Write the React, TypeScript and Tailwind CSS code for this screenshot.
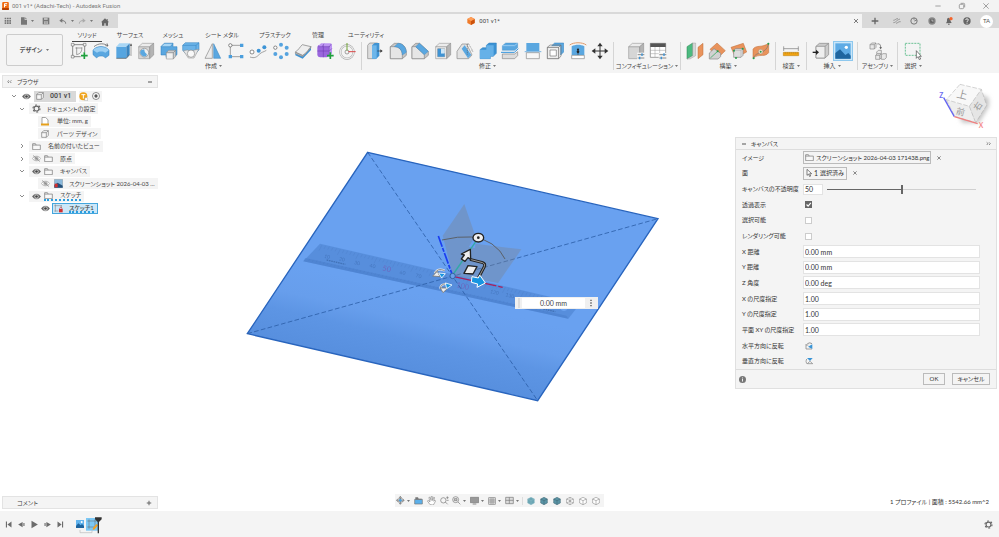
import React from 'react';

const BLUE = '#5aa7e0';
const GREY = '#d6d6d6';
const LINE = '#868686';

const Plus = ({ x, y }: { x: number; y: number }) => (
    <path d={`M${x - 10} ${y}h20M${x} ${y - 10}v20`} stroke="#1ea03c" strokeWidth="5" />
);

const Block = ({ fill = GREY, side = '#b4b4b4', top = '#ececec' }: { fill?: string; side?: string; top?: string }) => (
    <g stroke={LINE} strokeWidth="1.5" strokeLinejoin="round">
        <path d="M5 14h33v36H5z" fill={fill} />
        <path d="M5 14 16 4h34L38 14z" fill={top} />
        <path d="M38 14 50 4v35L38 50z" fill={side} />
    </g>
);

// every drawing uses a 54 x 54 box
const art: Record<string, React.ReactNode> = {
    sketch: (
        <g fill="none" stroke="#555" strokeWidth="2">
            <path d="M8 8h36M8 8v36h24M44 8v22" />
            <path d="M16 18h20M20 16v22C31 36 36 29 36 16" strokeWidth="1.5" />
            <path d="M4 4h8v8H4zM40 4h8v8h-8zM4 40h8v8H4z" fill="#f4f4f4" strokeWidth="1.5" />
            <Plus x={43} y={41} />
        </g>
    ),
    revolve: (
        <g>
            <path d="M3 24C14 10 40 10 51 24v16L40 48c-3-8-22-8-26 0L3 38z" fill={BLUE} stroke="#2f7fbd" strokeWidth="1.5" />
            <path d="M3 24l12 8c6-5 19-5 25 0l11-8C40 12 14 12 3 24z" fill="#9dd0f3" />
            <path d="M6 14C18 3 38 3 48 12M48 12l-8-1M48 12l-3-8" fill="none" stroke="#555" strokeWidth="2" />
        </g>
    ),
    extrude: (
        <g>
            <path d="M4 14h30v35H4z" fill="#56a5e0" />
            <path d="M4 14 13 4h31l-10 10z" fill="#a8d6f5" />
            <path d="M34 14 44 4v34L34 49z" fill="#3a85c0" />
            <path d="M4 49h30l10-11" fill="none" stroke="#555" strokeWidth="2" />
            <path d="M48 42V8" stroke="#555" strokeWidth="1.5" />
            <path d="M45 11l3-7 3 7z" fill="#333" />
        </g>
    ),
    hole: (
        <g>
            <Block />
            <circle cx="22" cy="32" r="13" fill="#eee" stroke={LINE} strokeWidth="2" />
            <path d="M13 24a11 11 0 0 0 17 15C28 32 22 34 22 22z" fill={BLUE} />
        </g>
    ),
    combine: (
        <g stroke="#2f7fbd" strokeWidth="1.5">
            <path d="M3 14 13 4h26v10h12v24L41 46H18v-7H3z" fill={BLUE} />
            <path d="M3 14 13 4h26l-8 10z" fill="#a8d6f5" />
            <path d="M19 32h21v19H19z" fill="#f1f1f1" stroke={LINE} />
            <path d="M19 32l7-7h21l-7 7zM40 32l7-7v18l-7 8z" fill="#ccc" stroke={LINE} />
        </g>
    ),
    form: (
        <g>
            <path d="M2 10 10 2h41v21L38 38 27 26 14 38 2 25z" fill="#6bb3e8" stroke="#2f7fbd" strokeWidth="1.5" />
            <path d="M2 10h40l9-8M42 10v22" fill="none" stroke="#2f7fbd" strokeWidth="1.5" />
            <path d="M4 26l12-2 11 6 11-6 12-2-14 26H19z" fill="#e6e6e6" stroke={LINE} strokeWidth="1.5" />
            <circle cx="27" cy="35" r="11" fill="#f8f8f8" stroke={LINE} strokeWidth="2" />
        </g>
    ),
    mirror: (
        <g>
            <path d="M25 5v44H3z" fill="#ececec" stroke={LINE} strokeWidth="2" />
            <path d="M29 5v44h21z" fill={BLUE} stroke="#2f7fbd" strokeWidth="1.5" />
        </g>
    ),
    rect: (
        <g>
            <path d="M10 10h34M10 10v34h34" fill="none" stroke="#777" strokeWidth="2" />
            <circle cx="10" cy="10" r="5" fill="#fff" stroke="#555" strokeWidth="2" />
            <path d="M39 5h10v10H39zM5 39h10v10H5zM39 39h10v10H39z" fill="#4a9edd" />
        </g>
    ),
    path: (
        <g>
            <path d="M3 45c14 5 20 0 28-8s12-6 21-12" fill="none" stroke="#777" strokeWidth="2" />
            <circle cx="9" cy="30" r="6" fill="#fff" stroke="#555" strokeWidth="2" />
            <circle cx="29" cy="26" r="6" fill="#3d94d6" />
            <circle cx="46" cy="16" r="6" fill="#3d94d6" />
        </g>
    ),
    circular: (
        <g fill="#55a3df">
            <circle cx="27" cy="8" r="6" />
            <circle cx="44" cy="17" r="6" />
            <circle cx="44" cy="36" r="6" />
            <circle cx="27" cy="46" r="6" />
            <circle cx="10" cy="36" r="6" />
            <circle cx="10" cy="17" r="5" fill="#fff" stroke="#555" strokeWidth="2" />
        </g>
    ),
    thicken: (
        <g strokeLinejoin="round">
            <path d="M4 32v8l22 10 25-26v-9L26 42z" fill="#3d94d6" />
            <path d="M4 30v5l22 9 25-26v-4L26 40z" fill="#bbb" stroke="#777" strokeWidth="1" />
            <path d="M4 30C14 24 18 14 25 8l26 6C44 20 40 32 26 40z" fill="#eee" stroke="#777" strokeWidth="2" />
        </g>
    ),
    tspline: (
        <g>
            <rect x="4" y="8" width="36" height="38" rx="9" fill="#9a66dd" />
            <path d="M6 14 15 4h28q5 0 5 6v24l-8 10V14z" fill="#bd95f2" />
            <path d="M4 27h36l8-8M22 10v36M40 12v32M6 14h34l6-8M24 5l-5 9" fill="none" stroke="#6736ad" strokeWidth="1.5" />
            <Plus x={43} y={41} />
        </g>
    ),
    clock: (
        <g fill="none">
            <circle cx="24" cy="30" r="20" stroke="#999" strokeWidth="6" />
            <circle cx="24" cy="30" r="20" stroke="#e8e8e8" strokeWidth="4" />
            <circle cx="24" cy="30" r="6" stroke="#777" strokeWidth="2" />
            <path d="M24 26V3" stroke="#73a536" strokeWidth="3" />
            <path d="M28 29h22" stroke="#d94848" strokeWidth="3" />
        </g>
    ),
    press: (
        <g>
            <path d="M5 10 11 3h24l-6 7v40H5z" fill="#ddd" stroke={LINE} strokeWidth="2" />
            <path d="M18 10 26 3h14v38l-9 9H18z" fill="#3f93d3" />
            <path d="M18 10h14v40H18z" fill="#6db6ea" />
            <path d="M34 27h12" stroke="#333" strokeWidth="2" />
            <path d="M43 22v10l7-5z" fill="#333" />
        </g>
    ),
    fillet: (
        <g stroke={LINE} strokeWidth="2">
            <path d="M4 14 16 4h12c14 0 24 12 24 28v8L40 50H4z" fill="#c5c5c5" />
            <path d="M4 14h12c14 0 24 10 24 26v10H4z" fill="#e6e6e6" />
            <path d="M16 14 27 4c14 0 24 12 25 27L40 39C40 24 30 14 16 14z" fill={BLUE} stroke="#2f7fbd" strokeWidth="1" />
        </g>
    ),
    chamfer: (
        <g stroke={LINE} strokeWidth="2">
            <path d="M3 14 14 4h12l26 24v12L40 50H3z" fill="#c5c5c5" />
            <path d="M3 14h11l26 24v12H3z" fill="#e6e6e6" />
            <path d="M14 14 25 4l27 24-12 10z" fill={BLUE} stroke="#2f7fbd" strokeWidth="1" />
        </g>
    ),
    shell: (
        <g>
            <Block fill="#eee" />
            <path d="M11 20h21v24H11z" fill="#fff" stroke={LINE} strokeWidth="2" />
            <path d="M11 20h10v14h11v10H11z" fill="#3f93d3" />
            <path d="M21 20h11v14H21z" fill="#cce6f8" />
        </g>
    ),
    draft: (
        <g>
            <path d="M3 50V28L18 6h14l16 33-10 11z" fill="#e3e3e3" stroke={LINE} strokeWidth="2" />
            <path d="M17 20 26 10l20 29-10 10z" fill={BLUE} />
            <path d="M34 5v33M38 6l13 22M38 5l-6 2M50 28l-5-4" fill="none" stroke="#555" strokeWidth="1.5" strokeDasharray="4 2" />
        </g>
    ),
    union: (
        <g stroke="#2f7fbd" strokeWidth="1.5">
            <path d="M3 23 11 17h11V10l8-7h22v31l-9 9H34v7H3z" fill="#3c92d3" />
            <path d="M3 23h31v27H3zM22 10h22v33H34V23H22z" fill="#65b1e8" stroke="none" />
        </g>
    ),
    split: (
        <g>
            <path d="M4 11 14 3h36v14l-9 8H4z" fill={BLUE} stroke="#2f7fbd" />
            <path d="M4 11h37l9-8" fill="none" stroke="#b9defa" strokeWidth="2" />
            <path d="M4 36h37l9-7v12l-9 9H4z" fill="#ddd" stroke={LINE} strokeWidth="2" />
            <path d="M0 31h40l12-11" fill="none" stroke="#3193dd" strokeWidth="3" />
        </g>
    ),
    plane: (
        <g>
            <path d="M7 3h39v24H7z" fill={BLUE} />
            <path d="M7 32h39v18H7z" fill="#f7f7f7" stroke={LINE} strokeWidth="2" />
            <path d="M2 29h50" stroke="#3d94d6" strokeWidth="2" />
        </g>
    ),
    offset: (
        <g>
            <path d="M17 11 26 3h27v27l-9 9V11z" fill={BLUE} stroke="#2f7fbd" strokeWidth="1.5" />
            <path d="M4 16h34v34H4z" fill="#eee" stroke="#555" strokeWidth="2" />
            <path d="M4 16 12 9h33l-7 7M45 9v33l-7 8" fill="none" stroke="#777" strokeWidth="2" />
            <path d="M12 24h19v18H12z" fill="#fff" stroke="#777" strokeWidth="2" />
        </g>
    ),
    scaleto: (
        <g>
            <path d="M2 9C14 0 40 0 52 9" fill="none" stroke="#e09a6a" strokeWidth="3" />
            <path d="M8 13c12-6 26-6 38 0v27H8z" fill={BLUE} />
            <path d="M8 40h38v10H8z" fill="#fff" stroke={LINE} strokeWidth="2" />
            <path d="M27 22v16" stroke="#222" strokeWidth="2" />
            <path d="M23 24l4-6 4 6z" fill="#222" />
            <circle cx="27" cy="29" r="4" fill="#222" />
        </g>
    ),
    move: (
        <g>
            <path d="M27 10v34M10 27h34" stroke="#333" strokeWidth="3" />
            <path d="M27 2l8 11H19zM27 52l8-11H19zM2 27l11-8v16zM52 27l-11-8v16z" fill="#333" />
        </g>
    ),
    config: (
        <g>
            <Block />
            <rect x="30" y="32" width="24" height="22" fill="#f4f4f4" />
            <path d="M32 38h20M32 48h20" stroke="#555" strokeWidth="2" />
            <path d="M45 34v8M38 44v8" stroke="#3d94d6" strokeWidth="4" />
        </g>
    ),
    table: (
        <g>
            <path d="M4 4h46v42H4z" fill="#fff" stroke="#777" strokeWidth="2" />
            <path d="M4 4h46v11H4z" fill="#555" />
            <path d="M4 25h46M4 35h46M18 15v30M32 15v30" stroke="#999" strokeWidth="1.5" />
            <rect x="29" y="33" width="25" height="21" fill="#f4f4f4" />
            <path d="M31 38h21M31 48h21" stroke="#555" strokeWidth="2" />
            <path d="M45 34v8M37 44v8" stroke="#3d94d6" strokeWidth="4" />
        </g>
    ),
    offsetPlane: (
        <g>
            <path d="M3 14 20 3v38L3 51z" fill="#4cba80" stroke="#27824f" strokeWidth="1.5" />
            <path d="M20 3h9v38L12 51H3l17-10z" fill="#d6d6d6" stroke={LINE} />
            <path d="M36 16 51 4v34L36 50z" fill="#e9935c" stroke="#bc6c37" strokeWidth="1.5" />
        </g>
    ),
    anglePlane: (
        <g>
            <path d="M6 22 27 3l25 23-22 21z" fill="#e9935c" stroke="#bc6c37" strokeWidth="1.5" />
            <path d="M4 33 18 20l20 14v10l-8 7H4z" fill="#d2d2d2" stroke={LINE} strokeWidth="2" />
            <path d="M7 48 30 27" stroke="#22a050" strokeWidth="2" />
            <circle cx="29" cy="28" r="3" fill="#22a050" />
        </g>
    ),
    pointPlane: (
        <g>
            <path d="M3 16 40 4l10 26-33 18z" fill="#e9935c" stroke="#bc6c37" strokeWidth="1.5" />
            <path d="M11 25 17 20h22v20l-6 6H11z" fill="#ddd" stroke={LINE} strokeWidth="2" />
            <path d="M11 25h22l6-5M33 25v21" fill="none" stroke={LINE} />
            <g fill="#22a050">
                <circle cx="12" cy="26" r="3" />
                <circle cx="38" cy="20" r="3" />
                <circle cx="18" cy="48" r="3" />
            </g>
        </g>
    ),
    pathPlane: (
        <g>
            <path d="M3 22C10 8 30 18 50 4v28C38 48 22 33 3 49z" fill="#e9935c" stroke="#bc6c37" strokeWidth="1.5" />
            <path d="M4 49C10 26 42 40 50 5" fill="none" stroke="#777" strokeWidth="2" />
            <circle cx="26" cy="29" r="7" fill="#f6dfc9" stroke="#777" />
            <g fill="#22a050">
                <circle cx="5" cy="49" r="3" />
                <circle cx="26" cy="29" r="3" />
                <circle cx="49" cy="5" r="3" />
            </g>
        </g>
    ),
    measure: (
        <g>
            <path d="M5 20h44M5 13v14M49 13v14" stroke="#777" strokeWidth="2" />
            <path d="M4 31h46v10H4z" fill="#f0a312" stroke="#b97800" strokeWidth="1.5" />
            <path d="M10 31v4M16 31v4M22 31v4M28 31v4M34 31v4M40 31v4M46 31v4" stroke="#8c5b00" />
        </g>
    ),
    insert: (
        <g>
            <g stroke={LINE} strokeWidth="2">
                <path d="M12 13 22 4h28v34L39 48H12z" fill="#ccc" />
                <path d="M12 13h27v35H12z" fill="#eee" />
                <path d="M39 13 50 4" />
            </g>
            <path d="M2 31h12" stroke="#222" strokeWidth="4" />
            <path d="M12 23v16l9-8z" fill="#222" />
        </g>
    ),
    picture: (
        <g>
            <path d="M4 4h46v46H4z" fill="#5eabe5" />
            <path d="M4 33 18 22l16 17 9-6 7 8v9H4z" fill="#1e659f" />
            <circle cx="37" cy="16" r="5" fill="#fff" />
        </g>
    ),
    assemble: (
        <g stroke={LINE} strokeWidth="2" fill="#e9e9e9">
            <path d="M3 8l5-5h13v13l-5 5H3zM3 8h13v13M16 8l5-5" />
            <path d="M20 40l5-5h12v12l-5 5H20zM20 40h12v12M32 40l5-5" />
            <path d="M37 40l4-5h11v12l-5 5H37zM23 30l5-5h9v10H23z" />
            <path d="M25 6c8-2 10 3 10 12" fill="none" stroke="#555" />
            <path d="M31 16l4 6 4-6z" fill="#555" stroke="none" />
        </g>
    ),
    select: (
        <g>
            <path d="M4 4h44v36H4z" fill="none" stroke="#4fb781" strokeWidth="2.5" strokeDasharray="6 3" />
            <path d="M37 26v23l5-5 4 9 4-2-4-8h6z" fill="#fff" stroke="#444" strokeWidth="2" />
        </g>
    ),
};

const Caret = () => (
    <svg viewBox="0 0 6 4" className="inline-block h-[2px] w-[3px] shrink-0">
        <path d="M0 0h6L3 4z" fill="#777" />
    </svg>
);

interface Group {
    label: string;
    icons: string[];
    width: string;
    spread?: boolean;
}

const groups: Group[] = [
    {
        label: '作成',
        width: 'w-[287px]',
        spread: true,
        icons: ['sketch', 'revolve', 'extrude', 'hole', 'combine', 'form', 'mirror', 'rect', 'path', 'circular', 'thicken', 'tspline', 'clock'],
    },
    {
        label: '修正',
        width: 'w-[243px]',
        spread: true,
        icons: ['press', 'fillet', 'chamfer', 'shell', 'draft', 'union', 'split', 'plane', 'offset', 'scaleto', 'move'],
    },
    { label: 'コンフィギュレーション', width: 'w-[58px]', icons: ['config', 'table'] },
    { label: '構築', width: 'w-[86px]', icons: ['offsetPlane', 'anglePlane', 'pointPlane', 'pathPlane'] },
    { label: '検査', width: 'w-[22px]', icons: ['measure'] },
    { label: '挿入', width: 'w-[42px]', icons: ['insert', 'picture'] },
    { label: 'アセンブリ', width: 'w-[31px]', icons: ['assemble'] },
    { label: '選択', width: 'w-[22px]', icons: ['select'] },
];

const tabs = [
    { label: 'ソリッド', width: 'w-[34px]', active: true },
    { label: 'サーフェス', width: 'w-[52px]' },
    { label: 'メッシュ', width: 'w-[34px]' },
    { label: 'シート メタル', width: 'w-[64px]' },
    { label: 'プラスチック', width: 'w-[42px]' },
    { label: '管理', width: 'w-[44px]' },
    { label: 'ユーティリティ', width: 'w-[52px]' },
];

const TitleBar = () => (
    <header className="flex h-3 shrink-0 items-center bg-[#f3f3f3] pl-[2px] text-[#777]">
        <svg viewBox="0 0 20 24" className="mr-[3px] h-2 w-[7px]">
            <rect width="20" height="24" rx="3" fill="#f0690f" />
            <path d="M0 18h20v6H0z" fill="#b13d00" />
            <path d="M7 5h8M7 5v11M7 10h6" stroke="#fff" strokeWidth="3" fill="none" />
        </svg>
        <h1 className="font-[Roboto,sans-serif]">001 v1* (Adachi-Tech) - Autodesk Fusion</h1>
        <div className="ml-auto flex items-center gap-4 pr-[9px]">
            <button aria-label="最小化">
                <svg viewBox="0 0 24 24" className="size-2"><path d="M4 12h16" stroke="#777" strokeWidth="2" /></svg>
            </button>
            <button aria-label="元に戻す">
                <svg viewBox="0 0 24 24" className="size-2" fill="none" stroke="#777" strokeWidth="2">
                    <rect x="4" y="7" width="13" height="13" rx="3" />
                    <path d="M8 4h9q3 0 3 3v9" />
                </svg>
            </button>
            <button aria-label="閉じる">
                <svg viewBox="0 0 24 24" className="size-2"><path d="M4 4l16 16M20 4L4 20" stroke="#777" strokeWidth="2" /></svg>
            </button>
        </div>
    </header>
);

const QuickAccess = () => (
    <div className="flex w-[118px] shrink-0 items-center pl-1 text-[#777]">
        <button aria-label="データ パネル">
            <svg viewBox="0 0 24 24" className="size-2" fill="#777">
                <path d="M2 2h5v5H2zM9 2h5v5H9zM16 2h5v5h-5zM2 9h5v5H2zM9 9h5v5H9zM16 9h5v5h-5zM2 16h5v5H2zM9 16h5v5H9zM16 16h5v5h-5z" />
            </svg>
        </button>
        <button aria-label="ファイル" className="ml-2 flex items-center gap-[3px]">
            <svg viewBox="0 0 24 24" className="size-2" fill="#777"><path d="M3 1h11v8h7v14H3zM16 1l5 6h-5z" /></svg>
            <Caret />
        </button>
        <button aria-label="保存" className="ml-2">
            <svg viewBox="0 0 24 24" className="size-2"><path d="M2 2h20v20H2z" fill="#777" /><path d="M6 3h11v6H6zM6 13h12v8H6z" fill="#bbb" /><path d="M8 16h8M8 19h8" stroke="#777" /></svg>
        </button>
        <button aria-label="元に戻す" className="ml-[9px] flex items-center gap-1">
            <svg viewBox="0 0 24 24" className="size-2"><path d="M6 11c9-1 14 2 14 9" fill="none" stroke="#777" strokeWidth="3" /><path d="M1 11l9-7v13z" fill="#777" /></svg>
            <Caret />
        </button>
        <button aria-label="やり直し" className="ml-1 flex items-center gap-1">
            <svg viewBox="0 0 24 24" className="size-2"><path d="M18 11c-9-1-14 2-14 9" fill="none" stroke="#aaa" strokeWidth="3" /><path d="M23 11l-9-7v13z" fill="#aaa" /></svg>
            <Caret />
        </button>
        <button aria-label="ホーム" className="ml-2 pt-[2px]">
            <svg viewBox="0 0 24 24" className="size-2" fill="#666"><path d="M12 1L0 13h3v10h7v-7h4v7h7V13h3L20 8V3h-3v3z" /></svg>
        </button>
    </div>
);

const TabBar = () => (
    <div className="flex h-4 shrink-0 border-t-2 border-[#d9d9d9] bg-[#d9d9d9]">
        <QuickAccess />
        <div className="flex flex-1 items-center bg-[#f4f4f4] pr-[3px]">
            <div className="flex flex-1 items-center justify-center gap-1 pr-1 font-[Roboto,sans-serif] text-[#444]">
                <svg viewBox="0 0 24 24" className="size-2">
                    <path d="M12 0l11 6v12l-11 6L1 18V6z" fill="#f07b2a" />
                    <path d="M12 12l11-6v12l-11 6z" fill="#cc520c" />
                    <path d="M12 0l11 6-11 6L1 6z" fill="#ff9f59" />
                </svg>
                001 v1*
            </div>
            <button aria-label="タブを閉じる">
                <svg viewBox="0 0 24 24" className="size-[6px]"><path d="M4 4l16 16M20 4L4 20" stroke="#555" strokeWidth="3" /></svg>
            </button>
        </div>
        <div className="flex w-[137px] shrink-0 items-center justify-between pl-[9px] pr-[6px]">
            <button aria-label="新しいデザイン" className="mr-1">
                <svg viewBox="0 0 24 24" className="size-2"><path d="M12 2v20M2 12h20" stroke="#666" strokeWidth="4" /></svg>
            </button>
            <button aria-label="拡張機能">
                <svg viewBox="0 0 24 24" className="size-2" fill="none" stroke="#777" strokeWidth="2"><path d="M1 10c6 0 8-6 14-5M1 17c8 0 7-6 20-11M9 19c5 0 6-6 14-5" /></svg>
            </button>
            <button aria-label="オンライン">
                <svg viewBox="0 0 24 24" className="size-2" fill="none" stroke="#777" strokeWidth="3"><circle cx="12" cy="12" r="9.5" /><path d="M12 3v5M13 12l8-4" /></svg>
            </button>
            <button aria-label="ジョブ ステータス">
                <svg viewBox="0 0 24 24" className="size-2"><circle cx="12" cy="12" r="11" fill="#888" /><circle cx="12" cy="12" r="7" fill="#666" /><path d="M12 7v5h5" stroke="#ddd" strokeWidth="2" fill="none" /></svg>
            </button>
            <button aria-label="通知">
                <svg viewBox="0 0 24 24" className="size-2"><path d="M10 2c5 1 6 5 7 11l3 5-17 1 3-6c0-6 0-10 4-11zM9 20h5v3H9z" fill="#666" /><circle cx="18" cy="5" r="5" fill="#f5642b" /></svg>
            </button>
            <button aria-label="ヘルプ">
                <svg viewBox="0 0 24 24" className="size-2"><circle cx="12" cy="12" r="11" fill="#666" /><path d="M8 9c0-5 8-5 8 0 0 3-4 2-4 6M12 17v3" fill="none" stroke="#fff" strokeWidth="2.5" /></svg>
            </button>
            <button className="flex size-[13px] items-center justify-center rounded-full bg-white text-[#555]">TA</button>
        </div>
    </div>
);

const Ribbon = () => (
    <div className="flex h-[45px] shrink-0 bg-[#f4f4f4] pl-[6px]">
        <button className="mr-[7px] mt-[6px] flex h-8 w-[57px] shrink-0 items-center justify-center gap-1 rounded-[2px] border border-[#ccc] font-bold text-[#555]">
            デザイン <Caret />
        </button>
        <div className="flex flex-col">
            <nav className="flex h-[14px]">
                {tabs.map(tab => (
                    <button key={tab.label} className={`flex flex-col items-center justify-between whitespace-nowrap pt-[2px] ${tab.width}`}>
                        <span className="leading-[9px]">{tab.label}</span>
                        {tab.active && <span className="h-px w-[30px] bg-[#444]" />}
                    </button>
                ))}
            </nav>
            <div className="flex">
                {groups.map((group, i) => (
                    <React.Fragment key={group.label}>
                        {i > 0 && <div className="mx-1 h-7 w-px shrink-0 bg-[#d5d5d5]" />}
                        <div className={`flex shrink-0 flex-col items-center ${group.width}`}>
                            <div className={group.spread ? 'flex w-full justify-between' : 'flex gap-1'}>
                                {group.icons.map(name => (
                                    <button
                                        key={name}
                                        aria-label={name}
                                        className={name === 'picture' ? 'bg-[#c9e6f9] outline outline-[#8ec8ee]' : ''}
                                    >
                                        <svg viewBox="0 0 54 54" className="size-[18px]">{art[name]}</svg>
                                    </button>
                                ))}
                            </div>
                            <button className="mt-[2px] flex h-2 items-center gap-[2px] whitespace-nowrap">
                                {group.label}
                                <Caret />
                            </button>
                        </div>
                    </React.Fragment>
                ))}
            </div>
        </div>
    </div>
);

const Chevron = ({ open }: { open?: boolean }) => (
    <svg viewBox="0 0 24 24" className="size-[6px] shrink-0" fill="none" stroke="#666" strokeWidth="3">
        <path d={open ? 'M4 8l8 8 8-8' : 'M8 4l8 8-8 8'} />
    </svg>
);

const Guillemet = ({ right }: { right?: boolean }) => (
    <svg viewBox="0 0 15 15" className="size-[5px]" fill="none" stroke="#555" strokeWidth="2">
        <path d={right ? 'M2 4l4 4-4 4M9 4l4 4-4 4' : 'M6 4L2 8l4 4M13 4L9 8l4 4'} />
    </svg>
);

const Eye = ({ off }: { off?: boolean }) => (
    <svg viewBox="0 0 24 18" className="h-[7px] w-[9px] shrink-0">
        <path d="M1 9C6 1 18 1 23 9 18 17 6 17 1 9z" fill={off ? '#fff' : '#666'} stroke={off ? '#888' : '#666'} strokeWidth="1.5" />
        <circle cx="12" cy="9" r="5" fill={off ? '#ddd' : '#ddd'} stroke={off ? '#888' : '#ddd'} />
        <circle cx="12" cy="9" r="3.5" fill={off ? '#999' : '#444'} />
        {off && <path d="M3 1l18 16" stroke="#888" strokeWidth="2" />}
    </svg>
);

const Folder = () => (
    <svg viewBox="0 0 24 20" className="h-[7px] w-[9px] shrink-0" fill="#f8f8f8" stroke="#777" strokeWidth="2">
        <path d="M1 2h8l2 4h12v13H1zM1 6h10" />
    </svg>
);

const BodyIcon = () => (
    <svg viewBox="0 0 24 24" className="size-2 shrink-0" fill="#f8f8f8" stroke="#777" strokeWidth="2">
        <path d="M2 8l6-6h14v14l-6 6H2zM2 8h14v14M16 8l6-6" />
    </svg>
);

const Gear = () => (
    <svg viewBox="0 0 24 24" className="size-[9px] shrink-0" fill="none" stroke="#666">
        <circle cx="12" cy="12" r="6.5" strokeWidth="3" />
        <circle cx="12" cy="12" r="9.5" strokeWidth="3" strokeDasharray="4.95 5" />
    </svg>
);

const TreeRow = ({ indent, children }: { indent: string; children: React.ReactNode }) => (
    <li className={`flex items-center ${indent}`}>{children}</li>
);

const Label = ({ children, gap = 'gap-2' }: { children: React.ReactNode; gap?: string }) => (
    <span className={`flex h-[11px] items-center whitespace-nowrap bg-[#f4f4f4] px-[3px] ${gap}`}>{children}</span>
);

const Browser = () => (
    <section className="w-[156px]">
        <div className="flex h-[13px] items-center border border-[#e3e3e3] bg-[#f4f4f4] px-1">
            <button aria-label="左へ隠す" className="mr-[5px]"><Guillemet /></button>
            <h2 className="flex-1">ブラウザ</h2>
            <button aria-label="折りたたむ">
                <svg viewBox="0 0 6 6" className="size-[6px]"><path d="M1 3h4" stroke="#555" /></svg>
            </button>
        </div>
        <ul className="mt-[2px] grid h-[125px] grid-rows-10">
            <TreeRow indent="gap-[3px] pl-[9px]">
                <Chevron open />
                <span className="pl-[2px]"><Eye /></span>
                <span className="flex h-[11px] items-center gap-[6px] bg-[#d9d9d9] pl-[2px] pr-[5px] font-[Roboto,sans-serif] text-[7px] font-medium"><BodyIcon />001 v1</span>
                <span className="flex h-[11px] items-center gap-1 bg-[#f4f4f4] pr-[2px]">
                    <svg viewBox="0 0 27 27" className="size-[9px]">
                        <circle cx="13" cy="13" r="12" fill="#f0a41c" />
                        <path d="M7 8h12M13 8v12" stroke="#fff" strokeWidth="3" />
                        <path d="M17 26v-7l4-3 5 3v7z" fill="#fff" stroke="#777" />
                    </svg>
                    <svg viewBox="0 0 24 24" className="size-2">
                        <circle cx="12" cy="12" r="10.5" fill="#fff" stroke="#555" strokeWidth="2" />
                        <circle cx="12" cy="12" r="5" fill="#555" />
                    </svg>
                </span>
            </TreeRow>
            <TreeRow indent="gap-1 pl-[17px]"><Chevron open /><Label gap="gap-[6px]"><Gear />ドキュメントの設定</Label></TreeRow>
            <TreeRow indent="pl-[36px]">
                <Label>
                    <svg viewBox="0 0 24 26" className="h-[9px] w-2 shrink-0">
                        <path d="M3 1h11l7 7v14H3z" fill="#fff" stroke="#777" strokeWidth="2" />
                        <path d="M0 19h24v6H0z" fill="#e6a01b" />
                    </svg>
                    単位: mm, g
                </Label>
            </TreeRow>
            <TreeRow indent="pl-[36px]"><Label><BodyIcon />パーツ デザイン</Label></TreeRow>
            <TreeRow indent="gap-1 pl-[17px]"><Chevron /><Label gap="gap-[7px]"><Folder />名前の付いたビュー</Label></TreeRow>
            <TreeRow indent="gap-1 pl-[17px]">
                <Chevron />
                <Label gap="gap-[3px]"><Eye off /><Folder /><span className="pl-1">原点</span></Label>
            </TreeRow>
            <TreeRow indent="gap-1 pl-[17px]">
                <Chevron open />
                <Label gap="gap-[3px]"><Eye /><Folder /><span className="pl-1">キャンバス</span></Label>
            </TreeRow>
            <TreeRow indent="pl-[36px]">
                <Label gap="gap-1">
                    <Eye off />
                    <svg viewBox="0 0 27 27" className="size-[9px] shrink-0">
                        <path d="M1 1h25v25H1z" fill="#8bb9dc" stroke="#777" />
                        <path d="M1 18l10-7 15 9v6H1z" fill="#234f78" />
                        <path d="M2 14h9v11H2z" fill="#d32f2f" />
                    </svg>
                    <span className="pl-[2px]">スクリーンショット 2026-04-03 ...</span>
                </Label>
            </TreeRow>
            <TreeRow indent="gap-1 pl-[17px]">
                <Chevron open />
                <Label gap="gap-[3px]">
                    <Eye />
                    <span className="flex items-center gap-[7px] border-b-2 border-dotted border-[#2b9fe0]"><Folder />スケッチ</span>
                </Label>
            </TreeRow>
            <TreeRow indent="gap-[2px] pl-[39px]">
                <Eye />
                <span className="flex h-[11px] items-center gap-[6px] border border-[#45a6dd] bg-[#cce7f8] px-px pr-[3px] font-medium">
                    <svg viewBox="0 0 27 27" className="size-[9px] shrink-0">
                        <path d="M4 1v22M1 5h22M1 21h12M22 3v9" fill="none" stroke="#777" strokeWidth="1.5" />
                        <path d="M15 15h11v10H15z" fill="#d32f2f" />
                        <path d="M17 15c0-7 7-7 7 0" fill="none" stroke="#d32f2f" strokeWidth="2" />
                    </svg>
                    <span className="border-b-2 border-dotted border-[#2b9fe0] leading-[7px]">スケッチ1</span>
                </span>
            </TreeRow>
        </ul>
    </section>
);

const ViewCube = () => (
    <svg viewBox="0 0 201 186" className="h-[62px] w-[67px] self-end">
        <defs>
            <filter id="soft" x="-30%" y="-30%" width="160%" height="160%"><feGaussianBlur stdDeviation="6" /></filter>
        </defs>
        <path d="M90 130l60-72 26 10 1 25-30 50-50 0z" fill="#c4c4c4" filter="url(#soft)" />
        <g strokeLinejoin="round">
            <path d="M90 28l64 15-36 51-69-20z" fill="#f8f8f8" />
            <path d="M49 74l69 20 19 49-63-19z" fill="#eeeeee" />
            <path d="M154 43l16 48-33 52-19-49z" fill="#e5e5e5" />
            <path d="M90 28l64 15-36 51-69-20zM118 94l19 49M49 74l25 50 63 19 33-52-16-48" fill="none" stroke="#aaa" strokeWidth="1.5" strokeDasharray="14 5" />
        </g>
        <g fill="#999" fontSize="26" textAnchor="middle">
            <text x="96" y="70" fontSize="32" transform="rotate(14 96 60)">上</text>
            <text x="92" y="120" transform="rotate(15 92 110)">前</text>
            <text x="144" y="103" transform="rotate(-56 144 94)">右</text>
        </g>
        <path d="M41 68l32 57" stroke="#6464f0" strokeWidth="4" />
        <path d="M73 125l70 21" stroke="#f08080" strokeWidth="4" />
        <text x="28" y="68" fill="#6f6ff2" fontSize="20" fontWeight="bold">Z</text>
        <text x="146" y="160" fill="#f58a8a" fontSize="20" fontWeight="bold">X</text>
    </svg>
);

const ticks = Array.from({ length: 66 }, (_, i) => i);

const Scene = () => (
    <svg viewBox="0 73 999 438" className="absolute inset-0 h-full w-full">
        <defs>
            <linearGradient id="sheet" gradientUnits="userSpaceOnUse" x1="640" y1="470" x2="576" y2="745">
                <stop offset="0" stopColor="#69a1f0" />
                <stop offset=".3" stopColor="#679eec" />
                <stop offset=".5" stopColor="#5d95e4" />
                <stop offset="1" stopColor="#548cdb" />
            </linearGradient>
        </defs>
        <g transform="translate(240 145) scale(.33333)">
            <path d="M383 22L1254 221 893 767 22 566z" fill="url(#sheet)" stroke="#2864bd" strokeWidth="4" />
            <path d="M240 296L1020 476 985 521 190 349z" fill="#5288d6" opacity=".75" />
            <path d="M190 349L985 521l-6-9L196 339z" fill="#477bc9" opacity=".5" />
            <g stroke="#4272b8" strokeWidth="1.5" opacity=".4">
                {ticks.map(i => (
                    <path key={i} d={`M${246 + i * 11} ${300 + i * 2.54}l${i % 5 ? -5 : -9} ${i % 5 ? 9 : 17}`} />
                ))}
                {ticks.map(i => (
                    <path key={i} d={`M${206 + i * 11} ${348 + i * 2.38}l3 -6`} />
                ))}
            </g>
            <g fill="#3a68ad" fontSize="15" opacity=".6">
                <text x="252" y="338" transform="rotate(13 252 338)">10</text>
                <text x="296" y="346" transform="rotate(13 296 346)">20</text>
                <text x="342" y="357" transform="rotate(13 342 357)">30</text>
                <text x="388" y="366" transform="rotate(13 388 366)">40</text>
                <text x="478" y="386" transform="rotate(13 478 386)">60</text>
                <text x="526" y="396" transform="rotate(13 526 396)">70</text>
                <text x="750" y="444" transform="rotate(13 750 444)">120</text>
                <text x="796" y="454" transform="rotate(13 796 454)">130</text>
            </g>
            <text x="426" y="376" fontSize="22" fill="#7358b4" opacity=".7" transform="rotate(13 426 376)">50</text>
            <text x="648" y="426" fontSize="22" fill="#7358b4" opacity=".7" transform="rotate(13 648 426)">100</text>
            <path d="M260 345l56 13M910 492l36 8" stroke="#34609f" strokeWidth="4" strokeDasharray="5 2" opacity=".6" />
            <circle cx="972" cy="488" r="10" fill="#6aa1ee" />
            <path d="M383 22L893 767M22 566L1254 221" stroke="#2d5fa8" strokeWidth="2.5" strokeDasharray="14 7" />
        </g>
        <g transform="translate(420 195) scale(.33333)">
            <g fill="#7b8390" opacity=".38">
                <path d="M133 27l33 95-68 118L68 122z" />
                <path d="M78 140l112 25 33 96-125-20z" />
                <path d="M166 146l138 17-70 102-75-20z" />
            </g>
            <path d="M66 135q100-24 150 12 28 20 39 45" fill="none" stroke="#5a6068" strokeWidth="3" />
            <path d="M55 123l42 117" stroke="#1a3df0" strokeWidth="5" strokeDasharray="34 4 12 4" />
            <path d="M98 240l76-110" stroke="#33a9a5" strokeWidth="4" />
            <path d="M102 245l146 32" stroke="#a8215e" strokeWidth="4" strokeDasharray="130 6" />
            <circle cx="98" cy="243" r="8" fill="#6ba1ea" stroke="#33619f" strokeWidth="3" />
            <path d="M150 193l38 10q9 3 5 12l-18 34" fill="none" stroke="#222" strokeWidth="9" />
            <path d="M150 193l38 10q9 3 5 12l-18 34" fill="none" stroke="#999" strokeWidth="3" />
            <g fill="#eee" stroke="#222" strokeWidth="4" strokeLinejoin="round">
                <ellipse cx="175" cy="128" rx="16" ry="13" />
                <path d="M144 212l27 3-12 22-27-2z" />
                <path d="M151 163l1 30-8-5-9 11-11-7 9-12-9-3z" />
            </g>
            <circle cx="175" cy="128" r="4" fill="#222" />
            <path d="M156 245l19 4 4-9 17 24-25 13 2-10-19-5z" fill="#1795e0" stroke="#fff" strokeWidth="3" />
            <g stroke="#777" strokeWidth="2.5" strokeLinejoin="round">
                <path d="M44 235q10-18 30-8" fill="none" stroke="#eee" strokeWidth="6" />
                <path d="M44 235q10-18 30-8" fill="none" />
                <path d="M38 243l14-14 8 16z" fill="#eee" />
                <path d="M56 234l20 2-11 13z" fill="#1795e0" stroke="#fff" />
                <path d="M79 266q-20 2-17 16" fill="none" stroke="#eee" strokeWidth="6" />
                <path d="M79 266q-20 2-17 16" fill="none" />
                <path d="M61 279l23 0-15 14z" fill="#eee" />
                <path d="M76 264l20 6-16 11z" fill="#1795e0" stroke="#fff" />
            </g>
        </g>
    </svg>
);

const Row = ({ label, id, children }: { label: string; id: string; children: React.ReactNode }) => (
    <div className="flex items-center">
        <label htmlFor={id} className="w-[61px] shrink-0 whitespace-nowrap">{label}</label>
        {children}
    </div>
);

const ClearButton = ({ label }: { label: string }) => (
    <button aria-label={label} className="ml-[6px]">
        <svg viewBox="0 0 12 12" className="size-1" stroke="#555" strokeWidth="2"><path d="M1 1l10 10M11 1L1 11" /></svg>
    </button>
);

const fields = [
    ['X 距離', '0.00 mm'],
    ['Y 距離', '0.00 mm'],
    ['Z 角度', '0.00 deg'],
    ['X の尺度指定', '1.00'],
    ['Y の尺度指定', '1.00'],
    ['平面 XY の尺度指定', '1.00'],
];

const checks = [
    { label: '透過表示', id: 'through', checked: true },
    { label: '選択可能', id: 'selectable', checked: false },
    { label: 'レンダリング可能', id: 'renderable', checked: false },
];

const CanvasDialog = () => (
    <section className="mb-auto w-[262px] border border-[#e0e0e0] bg-[#f4f4f4] text-[#333]">
        <div className="flex h-[12px] items-center border-b border-[#ddd] px-[5px]">
            <svg viewBox="0 0 6 6" className="mr-1 size-[6px]"><path d="M1 3h4" stroke="#555" /></svg>
            <h2 className="flex-1">キャンバス</h2>
            <button aria-label="展開"><Guillemet right /></button>
        </div>
        <div className="grid h-[219px] grid-rows-14 pl-[6px] pr-4">
            <Row label="イメージ" id="image">
                <button id="image" className="flex h-[13px] items-center gap-[2px] whitespace-nowrap border border-[#bbb] px-px">
                    <Folder />
                    スクリーンショット 2026-04-03 171438.png
                </button>
                <ClearButton label="イメージを解除" />
            </Row>
            <Row label="面" id="face">
                <button id="face" className="flex h-[13px] items-center gap-[2px] whitespace-nowrap border border-[#bbb] px-[2px]">
                    <svg viewBox="0 0 18 24" className="h-2 w-[6px]" fill="#fff" stroke="#444" strokeWidth="2"><path d="M3 1v18l5-4 3 8 3-2-3-7h6z" /></svg>
                    <span className="text-[7px]">1</span> 選択済み
                </button>
                <ClearButton label="面を解除" />
            </Row>
            <Row label="キャンバスの不透明度" id="opacity">
                <input id="opacity" defaultValue="50" className="h-[11px] w-5 border border-[#e3e3e3] bg-white px-px text-[7px]" />
                <input
                    type="range"
                    aria-label="不透明度"
                    defaultValue={50}
                    className="ml-1 h-[9px] min-w-0 flex-1 appearance-none bg-[linear-gradient(to_right,#666_50%,#d0d0d0_50%)] bg-[length:100%_1px] bg-center bg-no-repeat [&::-webkit-slider-thumb]:h-[9px] [&::-webkit-slider-thumb]:w-[2px] [&::-webkit-slider-thumb]:appearance-none [&::-webkit-slider-thumb]:bg-[#666]"
                />
                <span className="w-1" />
            </Row>
            {checks.map(c => (
                <Row key={c.id} label={c.label} id={c.id}>
                    <span className="relative ml-[2px] flex size-[7px]">
                        <input
                            type="checkbox"
                            id={c.id}
                            defaultChecked={c.checked}
                            className="size-[7px] appearance-none border border-[#ccc] bg-white checked:border-[#666] checked:bg-[#666]"
                        />
                        {c.checked && (
                            <svg viewBox="0 0 18 18" className="pointer-events-none absolute inset-0 size-[7px]">
                                <path d="M4 9l4 4 7-8" fill="none" stroke="#fff" strokeWidth="3" />
                            </svg>
                        )}
                    </span>
                </Row>
            ))}
            {fields.map(([label, value]) => (
                <Row key={label} label={label} id={label}>
                    <input id={label} defaultValue={value} className="h-[13px] min-w-0 flex-1 border border-[#e3e3e3] bg-white px-px text-[7px]" />
                </Row>
            ))}
            <Row label="水平方向に反転" id="flip-h">
                <button id="flip-h" className="ml-[2px]">
                    <svg viewBox="0 0 24 24" className="size-2"><path d="M3 6v15h18M3 9h7" stroke="#777" strokeWidth="2" fill="none" /><path d="M22 7v14L9 14z" fill="#3994d6" /><path d="M7 5q8-5 14 0" stroke="#666" strokeWidth="2" fill="none" /></svg>
                </button>
            </Row>
            <Row label="垂直方向に反転" id="flip-v">
                <button id="flip-v" className="ml-[2px]">
                    <svg viewBox="0 0 24 24" className="size-2"><path d="M6 3h17l-8 9z" fill="#3994d6" /><path d="M7 20l8-7 8 7zM5 6q-4 6 0 14" stroke="#777" strokeWidth="2" fill="#fff" /></svg>
                </button>
            </Row>
        </div>
        <div className="flex h-[19px] items-center gap-[7px] border-t border-[#ddd] pl-[3px] pr-[6px]">
            <svg viewBox="0 0 24 24" className="mr-auto size-[7px]"><circle cx="12" cy="12" r="12" fill="#777" /><path d="M12 5v3M12 10v9" stroke="#fff" strokeWidth="3" /></svg>
            <button className="h-3 w-[22px] border border-[#bbb]">OK</button>
            <button className="h-3 w-[38px] whitespace-nowrap border border-[#bbb]">キャンセル</button>
        </div>
    </section>
);

const SmallCube = ({ fill, stroke = '#777', wire }: { fill: string; stroke?: string; wire?: boolean }) => (
    <svg viewBox="0 0 24 24" className="size-2" fill={fill} stroke={stroke} strokeWidth="1.5" strokeLinejoin="round">
        <path d="M12 1l10 5v12l-10 5L2 18V6z" />
        <path d="M2 6l10 5 10-5M12 11v12" fill="none" />
        {wire && <path d="M12 1v12M2 18l10-5 10 5" fill="none" />}
    </svg>
);

const NavBar = () => (
    <div className="mb-[2px] flex h-[13px] items-center justify-between whitespace-nowrap bg-[#f4f4f4] px-[1px]">
        <div className="flex w-[123px] items-center justify-between">
            <button aria-label="オービット" className="flex items-center gap-[2px]">
                <svg viewBox="0 0 27 27" className="size-[9px]" fill="none" stroke="#666" strokeWidth="2"><path d="M13 2v22M2 13h22M9 6l4-5 4 5M9 20l4 5 4-5" /><ellipse cx="13" cy="13" rx="11" ry="5" /><circle cx="13" cy="13" r="4" fill="#4ba3e2" stroke="none" /></svg>
                <Caret />
            </button>
            <button aria-label="ビュー正面"><svg viewBox="0 0 27 27" className="size-[9px]"><path d="M2 10h23v14H2z" fill="#5cb0ea" stroke="#777" strokeWidth="2" /><path d="M4 4h8l2 4h9v3H4z" fill="#777" /></svg></button>
            <button aria-label="画面移動"><svg viewBox="0 0 24 24" className="size-[9px]" fill="#fff" stroke="#888" strokeWidth="1.7"><path d="M8 23L1 13l3-1 4 4L5 4l3-1 3 9V1h3l1 11 3-9 2 1-2 10 3-3 2 2-6 11z" /></svg></button>
            <button aria-label="ズーム"><svg viewBox="0 0 27 27" className="size-[9px]" fill="none" stroke="#777" strokeWidth="2"><circle cx="10" cy="13" r="8" /><path d="M16 18l7 7M19 5h7M22 1v8M20 13h6" /></svg></button>
            <button aria-label="フィット" className="flex items-center gap-[2px]">
                <svg viewBox="0 0 27 27" className="size-[9px]" fill="none" stroke="#777" strokeWidth="2"><circle cx="11" cy="11" r="9" /><path d="M7 8h8v6H7z" fill="#ccc" /><path d="M18 18l7 7" /></svg>
                <Caret />
            </button>
            <button aria-label="表示設定" className="flex items-center gap-[2px]">
                <svg viewBox="0 0 27 27" className="size-[9px]"><path d="M1 4h25v16H1z" fill="#999" stroke="#777" strokeWidth="2" /><path d="M8 24h11" stroke="#888" strokeWidth="3" /></svg>
                <Caret />
            </button>
            <button aria-label="グリッド" className="flex items-center gap-[2px]">
                <svg viewBox="0 0 24 24" className="size-2" fill="none" stroke="#777" strokeWidth="2"><path d="M2 2h20v20H2zM2 9h20M2 15h20M9 2v20M15 2v20" /></svg>
                <Caret />
            </button>
            <button aria-label="ビューポート" className="flex items-center gap-[2px]">
                <svg viewBox="0 0 27 27" className="size-[9px]"><path d="M2 4h23v19H2z" fill="#ddd" stroke="#777" strokeWidth="2" /><path d="M13 4v19M2 13h23" stroke="#777" strokeWidth="2" /></svg>
                <Caret />
            </button>
        </div>
        <div className="ml-[2px] flex w-[81px] items-center justify-between border-l border-[#ddd] pl-1 pr-[3px]">
            <button aria-label="シェーディング"><SmallCube fill="#6ba6b4" stroke="#8dbac5" /></button>
            <button aria-label="隠線付き"><SmallCube fill="#5a94a5" stroke="#3c6370" /></button>
            <button aria-label="エッジ付き"><SmallCube fill="#5a94a5" stroke="#3c6370" /></button>
            <button aria-label="ワイヤフレーム"><SmallCube fill="#fff" wire /></button>
            <button aria-label="隠線ワイヤ"><SmallCube fill="#fff" /></button>
            <button aria-label="表示エッジ"><SmallCube fill="#fff" /></button>
        </div>
    </div>
);

const Timeline = () => (
    <footer className="flex h-[26px] shrink-0 items-center bg-[#f4f4f4] pl-1 pr-[6px]">
        <div className="flex gap-1">
            {[
                ['先頭', 'M5 4h3v16H5zM20 4v16L9 12z'],
                ['戻る', 'M15 5v14L3 12zM17 8h3v8h-3z'],
                ['再生', 'M4 2v20l17-10z'],
                ['進む', 'M9 5v14l12-7zM4 8h3v8H4z'],
                ['末尾', 'M16 4h3v16h-3zM4 4v16l11-8z'],
            ].map(([name, d]) => (
                <button key={name} aria-label={name}>
                    <svg viewBox="0 0 24 24" className="size-[9px]" fill="#6c6c6c"><path d={d} /></svg>
                </button>
            ))}
        </div>
        <svg viewBox="0 0 84 60" className="ml-[10px] h-5 w-7">
            <path d="M3 18h24v24H3z" fill="#62b4ee" />
            <path d="M3 36l7-8 7 6 4-4 6 6v6H3z" fill="#1e659f" />
            <circle cx="20" cy="24" r="3" fill="#fff" />
            <path d="M33 12h38v38H33z" fill="#7cc8f5" />
            <path d="M42 16v28M37 21h28M37 39h24M60 16v20" stroke="#666" strokeWidth="1.5" />
            <path d="M54 42l10-12 5 4-10 12-6 2z" fill="#f5a021" />
            <path d="M15 48v8h36v-8" fill="none" stroke="#bbb" strokeWidth="2" />
            <path d="M60 10h20v6l-8 8v34h-4V24l-8-8z" fill="#333" />
        </svg>
        <button aria-label="設定" className="ml-auto"><Gear /></button>
    </footer>
);

const App: React.FC = () => {
    return (
        <div className="flex h-screen flex-col overflow-hidden bg-white font-[Lato,'Noto_Sans_CJK_JP',sans-serif] text-[6px] leading-none text-[#444] [font-feature-settings:'palt']">
            <TitleBar />
            <TabBar />
            <Ribbon />
            <main className="relative min-h-0 flex-1">
                <Scene />
                <div className="absolute left-[515px] top-[224px] flex h-3 w-[83px] items-center bg-[#f0f0f0] p-px">
                    <span className="mx-[2px] h-full w-[2px] border-x border-[#ddd]" />
                    <input aria-label="距離" defaultValue="0.00 mm" className="h-full min-w-0 flex-1 bg-white text-center text-[7px]" />
                    <button aria-label="その他" className="w-3">
                        <svg viewBox="0 0 12 24" className="mx-auto h-2 w-1" fill="#555"><path d="M4 2h4v4H4zM4 10h4v4H4zM4 18h4v4H4z" /></svg>
                    </button>
                </div>
                <div className="relative flex h-full justify-between px-[2px] pb-[2px] pt-[2px]">
                    <div className="flex flex-1 flex-col justify-between">
                        <Browser />
                        <div className="flex h-[13px] w-[156px] items-center justify-between border border-[#e3e3e3] bg-[#f4f4f4] pl-[14px] pr-[5px]">
                            コメント
                            <button aria-label="コメントを追加">
                                <svg viewBox="0 0 24 24" className="size-[6px]"><path d="M12 3v18M3 12h18" stroke="#666" strokeWidth="4" /></svg>
                            </button>
                        </div>
                    </div>
                    <div className="flex w-[209px] flex-col justify-end"><NavBar /></div>
                    <div className="flex flex-1 flex-col items-end justify-between">
                        <ViewCube />
                        <CanvasDialog />
                        <p className="whitespace-nowrap pb-1 pr-2 text-[#333]">1 プロファイル | 面積 : 5542.66 mm^2</p>
                    </div>
                </div>
            </main>
            <Timeline />
        </div>
    );
};

export default App;
